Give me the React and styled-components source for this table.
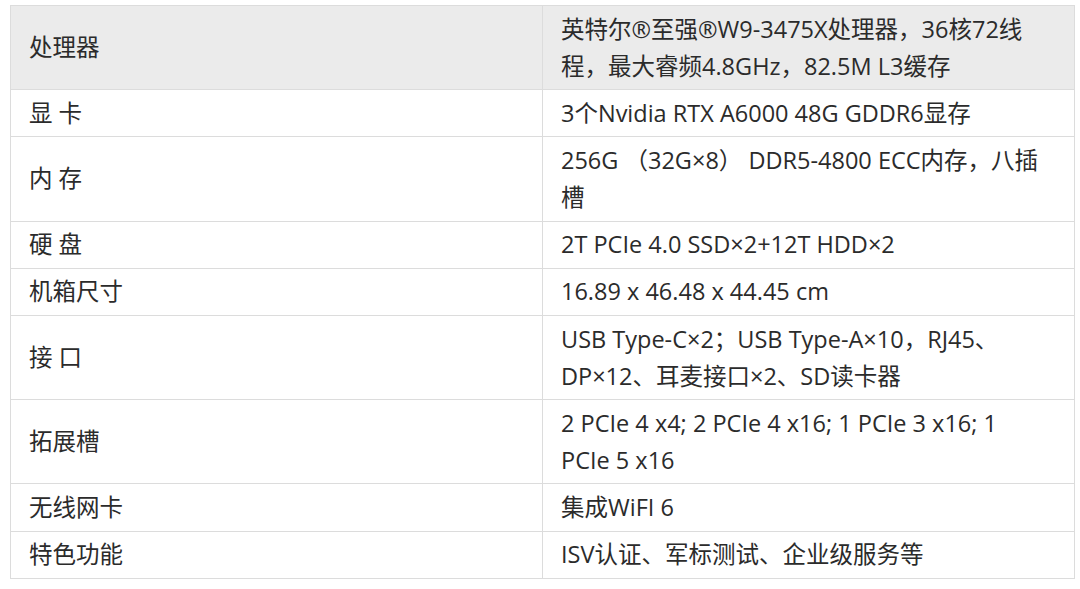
import React from 'react';
import styled, { createGlobalStyle } from 'styled-components';

const specs = [
  { name: '处理器', value: ['英特尔®至强®W9-3475X处理器，36核72线', '程，最大睿频4.8GHz，82.5M L3缓存'], head: true },
  { name: '显 卡', value: ['3个Nvidia RTX A6000 48G GDDR6显存'] },
  { name: '内 存', value: ['256G （32G×8） DDR5-4800 ECC内存，八插', '槽'] },
  { name: '硬 盘', value: ['2T PCIe 4.0 SSD×2+12T HDD×2'] },
  { name: '机箱尺寸', value: ['16.89 x 46.48 x 44.45 cm'] },
  { name: '接 口', value: ['USB Type-C×2；USB Type-A×10，RJ45、', 'DP×12、耳麦接口×2、SD读卡器'] },
  { name: '拓展槽', value: ['2 PCIe 4 x4; 2 PCIe 4 x16; 1 PCIe 3 x16; 1', 'PCIe 5 x16'] },
  { name: '无线网卡', value: ['集成WiFI 6'] },
  { name: '特色功能', value: ['ISV认证、军标测试、企业级服务等'] },
];

export default function App() {
  return (
    <>
      <GlobalStyle />
      <Page>
        <SpecTable>
          <tbody>
            {specs.map((row) => (
              <Row key={row.name} head={row.head}>
                <Cell>{row.name}</Cell>
                <Cell>
                  {row.value.map((line, i) => (
                    <React.Fragment key={i}>
                      {i > 0 && <br />}
                      {line}
                    </React.Fragment>
                  ))}
                </Cell>
              </Row>
            ))}
          </tbody>
        </SpecTable>
      </Page>
    </>
  );
}

const GlobalStyle = createGlobalStyle`
  body {
    margin: 0;
    background: #ffffff;
    font-family: "Open Sans", "Noto Sans CJK SC", sans-serif;
  }
`;

const Page = styled.div`
  padding: 5px 6px 0 10px;
`;

const SpecTable = styled.table`
  width: 1065px;
  border-collapse: collapse;
  table-layout: fixed;
  color: #2b2b2b;
  font-size: 23.5px;
`;

const Row = styled.tr`
  background-color: ${(props) => (props.head ? '#ebebeb' : '#ffffff')};
`;

const Cell = styled.td`
  width: 50%;
  border: 1px solid #dcdcdc;
  padding: 4.6px 18px;
  line-height: 37px;
  vertical-align: middle;
  white-space: nowrap;
`;
